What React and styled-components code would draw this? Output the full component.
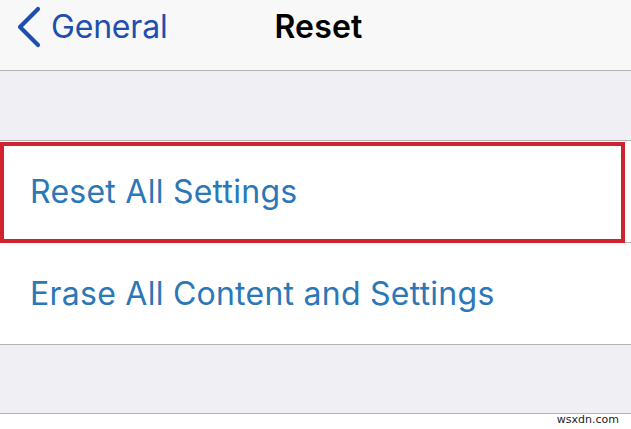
import styled, { createGlobalStyle } from "styled-components";

const GlobalStyle = createGlobalStyle`
  html, body {
    margin: 0;
    padding: 0;
    background: #ffffff;
  }
  body {
    font-family: Inter, "Liberation Sans", Arial, sans-serif;
    -webkit-font-smoothing: antialiased;
  }
`

const Screen = styled.div`
  width: 631px;
  height: 429px;
  display: flex;
  flex-direction: column;
  background: #ffffff;
  overflow: hidden;
`

const NavBar = styled.header`
  height: 71px;
  box-sizing: border-box;
  padding: 0 0 18px 0;
  display: grid;
  grid-template-columns: 1fr auto 1fr;
  align-items: center;
  background: #f8f8f8;
  border-bottom: 1px solid #b3b3b6;
`

const BackButton = styled.button`
  display: flex;
  align-items: center;
  gap: 9px;
  padding: 0 0 0 16px;
  border: none;
  background: none;
  color: #1f4fae;
  font-family: inherit;
  font-size: 32px;
  letter-spacing: -0.2px;
  cursor: pointer;

  svg {
    display: block;
    margin-top: 1px;
  }
`

const Title = styled.h1`
  margin: 0;
  padding-left: 6px;
  font-size: 32px;
  font-weight: 600;
  color: #000000;
  letter-spacing: 0.2px;
`

const Spacer = styled.div`
  height: ${(p) => p.h}px;
  flex-shrink: 0;
  background: #efeff4;
  border-bottom: 1px solid #b3b3b6;
`

const Group = styled.div`
  background: #ffffff;
  display: flex;
  flex-direction: column;
`

const Row = styled.div`
  position: relative;
  height: 101px;
  display: flex;
  align-items: center;
  padding-left: 30px;
  border-bottom: 1px solid #b3b3b6;
  color: #2b77b8;
  font-size: 32px;
  letter-spacing: 0.25px;

  ${(p) =>
    p.$highlight &&
    `
    &::after {
      content: "";
      position: absolute;
      left: 0;
      right: 6px;
      top: 1px;
      bottom: -1px;
      border: 4px solid #d3222f;
      pointer-events: none;
    }
  `}
`

const Footer = styled.footer`
  flex: 1;
  display: flex;
  justify-content: flex-end;
  align-items: flex-start;
  padding-right: 12px;
  font-family: "DejaVu Sans", sans-serif;
  font-size: 11px;
  line-height: 11px;
  color: #222222;
`

function BackChevron() {
  return (
    <svg width="26" height="42" viewBox="0 0 26 42">
      <path
        d="M22 3 L4 21 L22 39"
        fill="none"
        stroke="currentColor"
        strokeWidth="4.2"
        strokeLinecap="round"
        strokeLinejoin="round"
      />
    </svg>
  )
}

export default function App() {
  return (
    <>
      <GlobalStyle />
      <Screen>
        <NavBar>
          <BackButton>
            <BackChevron />
            General
          </BackButton>
          <Title>Reset</Title>
          <div />
        </NavBar>
        <Spacer h={69} />
        <Group>
          <Row $highlight>Reset All Settings</Row>
          <Row>Erase All Content and Settings</Row>
        </Group>
        <Spacer h={68} />
        <Footer>wsxdn.com</Footer>
      </Screen>
    </>
  )
}
